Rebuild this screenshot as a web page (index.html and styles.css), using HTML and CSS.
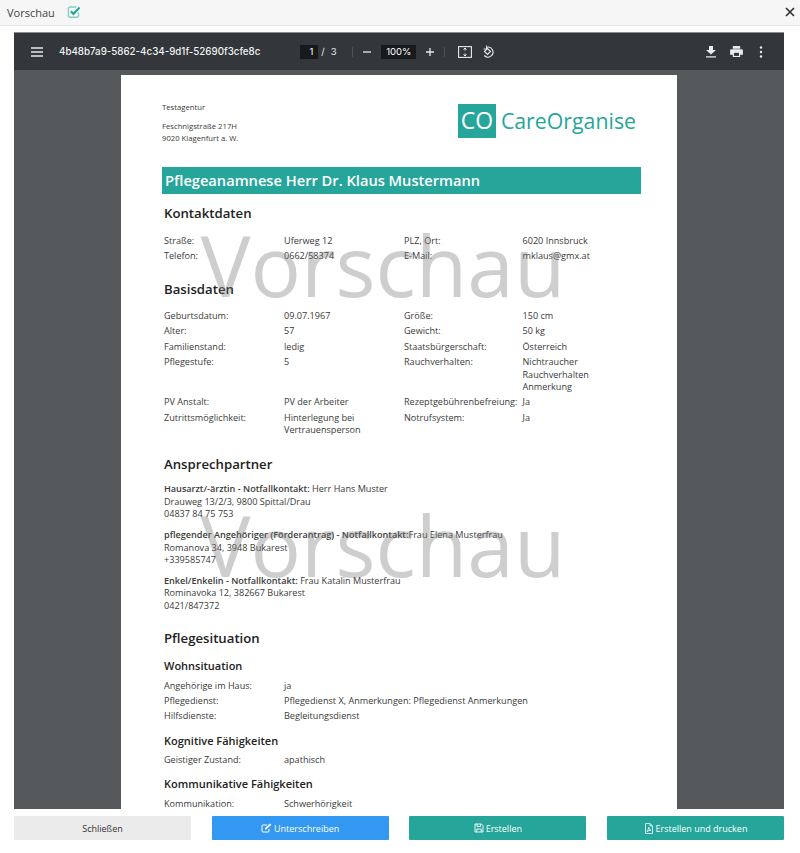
FILE: index.html
```html
<!DOCTYPE html>
<html lang="de">
<head>
<meta charset="utf-8">
<title>Vorschau</title>
<link rel="stylesheet" href="styles.css">
</head>
<body>
<header class="modal-head">
  <span class="modal-title">Vorschau</span>
  <svg class="check-icon" viewBox="0 0 14 14" width="14" height="14"><path d="M11.5 7.5v3.2a1.6 1.6 0 0 1-1.6 1.6H3a1.6 1.6 0 0 1-1.6-1.6V3.6A1.6 1.6 0 0 1 3 2h6.5" fill="none" stroke="#7fcfc4" stroke-width="1.4"/><path d="M3.8 6.2l2.7 2.7 6-6.4" fill="none" stroke="#26a69a" stroke-width="2.2"/></svg>
  <svg class="close-icon" viewBox="0 0 10 10" width="10" height="10"><path d="M1 1l8 8M9 1l-8 8" stroke="#2f3437" stroke-width="1.7" fill="none"/></svg>
</header>
<section class="viewer">
  <div class="toolbar">
    <svg class="tb-menu" viewBox="0 0 12 10" width="12" height="10"><path d="M0 1h12M0 5h12M0 9h12" stroke="#e8eaed" stroke-width="1.5"/></svg>
    <span class="doc-id">4b48b7a9-5862-4c34-9d1f-52690f3cfe8c</span>
    <div class="tb-center">
      <div class="tb-pages"><span class="num-box">1</span><span class="tb-slash">/</span><span class="tb-total">3</span></div>
      <i class="tb-sep sep-a"></i>
      <svg viewBox="0 0 10 10" width="10" height="10"><path d="M1 5h8" stroke="#e8eaed" stroke-width="1.3"/></svg>
      <span class="zoom-box">100%</span>
      <svg viewBox="0 0 10 10" width="10" height="10"><path d="M1 5h8M5 1v8" stroke="#e8eaed" stroke-width="1.3"/></svg>
      <i class="tb-sep sep-b"></i>
      <svg class="tb-fit" viewBox="0 0 14 12" width="14" height="12"><rect x=".6" y=".6" width="12.8" height="10.8" fill="none" stroke="#e8eaed" stroke-width="1.1"/><path d="M7 2v2.6M5.5 3.5L7 2l1.500 1.500M7 10V7.400M5.500 8.500L7 10l1.500-1.500" fill="none" stroke="#e8eaed"/></svg>
      <svg class="tb-rot" viewBox="0 0 14 14" width="14" height="14"><path d="M5.200 2.400A5 5 0 1 1 3.300 10.500" fill="none" stroke="#e8eaed" stroke-width="1.100"/><path d="M6.500 3.500L3.500 6.500l3 3 3-3z" fill="none" stroke="#e8eaed" stroke-width="1.100"/><path d="M5.500 .5v3.500H2.500" fill="none" stroke="#e8eaed" stroke-width=".9"/></svg>
    </div>
    <div class="tb-right">
      <svg viewBox="0 0 10 12" width="10" height="12"><path d="M3 0h4v4h3L5 8.500 0 4h3z M0 10.300h10V11.500H0z" fill="#e8eaed"/></svg>
      <svg viewBox="0 0 14 12" width="13" height="11"><path d="M3 0h8v3H3z M1.500 3.500h11A1.500 1.500 0 0 1 14 5v4.500h-3V12H3V9.500H0V5a1.500 1.500 0 0 1 1.500-1.500z" fill="#e8eaed"/><path d="M4.300 7.500h5.400v3.300H4.300z" fill="#33363a"/></svg>
      <svg class="tb-more" viewBox="0 0 4 12" width="4" height="12"><circle cx="2" cy="1.500" r="1.200" fill="#e8eaed"/><circle cx="2" cy="6" r="1.200" fill="#e8eaed"/><circle cx="2" cy="10.500" r="1.200" fill="#e8eaed"/></svg>
    </div>
  </div>
  <div class="canvas">
    <article class="page">
      <div class="letterhead">
        <div class="sender">
          <p class="agency">Testagentur</p>
          <p>Feschnigstraße 217H<br>9020 Klagenfurt a. W.</p>
        </div>
        <div class="logo"><span class="logo-mark">CO</span><span class="logo-name">CareOrganise</span></div>
      </div>
      <h1 class="doc-title">Pflegeanamnese Herr Dr. Klaus Mustermann</h1>

      <h2 class="sec first">Kontaktdaten</h2>
      <div class="grid4">
        <span>Straße:</span><span>Uferweg 12</span><span>PLZ, Ort:</span><span>6020 Innsbruck</span>
        <span>Telefon:</span><span>0662/58374</span><span>E-Mail:</span><span>mklaus@gmx.at</span>
      </div>

      <h2 class="sec">Basisdaten</h2>
      <div class="grid4">
        <span>Geburtsdatum:</span><span>09.07.1967</span><span>Größe:</span><span>150 cm</span>
        <span>Alter:</span><span>57</span><span>Gewicht:</span><span>50 kg</span>
        <span>Familienstand:</span><span>ledig</span><span>Staatsbürgerschaft:</span><span>Österreich</span>
        <span>Pflegestufe:</span><span>5</span><span>Rauchverhalten:</span><span>Nichtraucher<br>Rauchverhalten<br>Anmerkung</span>
        <span>PV Anstalt:</span><span>PV der Arbeiter</span><span>Rezeptgebührenbefreiung:</span><span>Ja</span>
        <span>Zutrittsmöglichkeit:</span><span>Hinterlegung bei<br>Vertrauensperson</span><span>Notrufsystem:</span><span>Ja</span>
      </div>

      <h2 class="sec sec-contacts">Ansprechpartner</h2>
      <div class="contact"><b>Hausarzt/-ärztin - Notfallkontakt:</b> Herr Hans Muster<br>Drauweg 13/2/3, 9800 Spittal/Drau<br>04837 84 75 753</div>
      <div class="contact"><b>pflegender Angehöriger (Förderantrag) - Notfallkontakt:</b>Frau Elena Musterfrau<br>Romanova 34, 3948 Bukarest<br>+339585747</div>
      <div class="contact"><b>Enkel/Enkelin - Notfallkontakt:</b> Frau Katalin Musterfrau<br>Rominavoka 12, 382667 Bukarest<br>0421/847372</div>

      <h2 class="sec sec-tight">Pflegesituation</h2>
      <h3 class="sub">Wohnsituation</h3>
      <div class="grid2">
        <span>Angehörige im Haus:</span><span>ja</span>
        <span>Pflegedienst:</span><span>Pflegedienst X, Anmerkungen: Pflegedienst Anmerkungen</span>
        <span>Hilfsdienste:</span><span>Begleitungsdienst</span>
      </div>
      <h3 class="sub">Kognitive Fähigkeiten</h3>
      <div class="grid2">
        <span>Geistiger Zustand:</span><span>apathisch</span>
      </div>
      <h3 class="sub">Kommunikative Fähigkeiten</h3>
      <div class="grid2">
        <span>Kommunikation:</span><span>Schwerhörigkeit</span>
      </div>
      <span class="watermark wm-one">Vorschau</span>
      <span class="watermark wm-two">Vorschau</span>
    </article>
  </div>
</section>
<footer class="actions">
  <button class="btn btn-grey">Schließen</button>
  <button class="btn btn-blue"><svg viewBox="0 0 11 10" width="11" height="10"><path d="M8 6v2a1 1 0 0 1-1 1H2a1 1 0 0 1-1-1V3a1 1 0 0 1 1-1h4" fill="none" stroke="currentColor"/><path d="M4 5l5-4.500 1.300 1.300-5 4.700H4z" fill="currentColor"/></svg>Unterschreiben</button>
  <button class="btn btn-teal"><svg viewBox="0 0 10 10" width="10" height="10"><path d="M1 1h6.500L9 2.500V9H1z M3 1v2.500h3.500V1 M2.800 9V6h4.400v3" fill="none" stroke="currentColor" stroke-width=".9"/></svg>Erstellen</button>
  <button class="btn btn-teal"><svg viewBox="0 0 10 11" width="10" height="11"><path d="M1.500 .5h4.500l2.500 2.500v7.500h-7z M6 .5V3h2.500 M3 8.500c1-1 1.500-3 1.800-4.200.3 1.500 1 2.500 2.200 3-1.500 0-2.800.4-4 1.200z" fill="none" stroke="currentColor" stroke-width=".8"/></svg>Erstellen und drucken</button>
</footer>
</body>
</html>
```
FILE: styles.css
```css
* { box-sizing: border-box; }
html, body { margin: 0; height: 853px; overflow: hidden; }
body { background: #fff; font-family: "Open Sans", sans-serif; color: #333; display: flex; flex-direction: column; }

.modal-head { height: 26px; flex: none; display: flex; align-items: center; padding: 0 5px 1px 7px; background: #f6f6f6; border-bottom: 1px solid #e6e6e6; }
.modal-title { font-size: 11px; color: #444; }
.check-icon { margin-left: 12px; }
.close-icon { margin-left: auto; }

.viewer { flex: none; height: 777px; margin: 6px 16px 0 14px; display: flex; flex-direction: column; background: #54585a; }
.toolbar { height: 38px; flex: none; display: flex; align-items: center; padding: 0 21px 0 17px; background: #33363a; border-top: 1px solid #8a8c8e; color: #e8eaed; }
.doc-id { margin-left: 16px; font: 500 9.750px Inter, Roboto, sans-serif; color: #f1f3f4; white-space: nowrap; }
.tb-center { display: flex; align-items: center; margin-left: 40px; font: 400 9.500px Inter, Roboto, sans-serif; }
.tb-pages { width: 52px; display: flex; align-items: center; }
.num-box { width: 18px; height: 14px; background: #18191b; text-align: right; padding-right: 5px; line-height: 14px; color: #fff; }
.tb-slash { margin-left: 3px; }
.tb-total { margin-left: 6px; }
.tb-sep { width: 1px; height: 10px; background: #4f5256; }
.sep-a { margin-right: 9px; }
.sep-b { margin: 0 13px 0 9px; }
.zoom-box { width: 35px; height: 14px; background: #18191b; margin: 0 9px; text-align: center; line-height: 14px; color: #fff; }
.tb-rot { margin-left: 9px; }
.tb-right { margin-left: auto; display: flex; align-items: center; gap: 14px; }
.tb-more { margin-left: 2px; }

.canvas { flex: 1; min-height: 0; overflow: hidden; display: flex; justify-content: center; padding-top: 5px; }
.page { width: 556px; height: 800px; flex: none; background: #fff; padding: 27px 36px 0 42px; position: relative; font-size: 9.100px; line-height: 15.500px; color: #3a3a3a; }

.letterhead { display: flex; justify-content: space-between; height: 65px; font-size: 7.700px; line-height: 11.800px; }
.sender { margin-left: -1px; }
.sender p { margin: 0 0 7.500px; }
.logo { display: flex; align-items: center; height: 34px; margin: 2px 5px 0 0; }
.logo-mark { width: 38px; height: 34px; background: #26a69a; color: #fff; font-size: 23px; font-weight: 500; line-height: 33px; text-align: center; }
.logo-name { margin-left: 5px; color: #26a69a; font-size: 21.300px; font-weight: 500; line-height: 34px; }

.doc-title { margin: 0 0 0 -1.500px; height: 27px; padding-left: 3.500px; background: #26a69a; color: #fff; font-size: 14.650px; font-weight: 600; line-height: 27px; }
.sec { margin: 17px 0 12px 1px; font-size: 13.200px; font-weight: 600; line-height: 18px; color: #222; }
.sec.first { margin-top: 10px; margin-bottom: 13px; }
.sec-contacts { margin-top: 19px; margin-bottom: 10px; }
.sec-tight { margin-bottom: 11px; margin-top: 17px; }
.sub { margin: 10px 0 6.500px 1px; font-size: 11px; font-weight: 600; line-height: 15px; color: #222; }
.sec-tight + .sub { margin-top: 0; }
.grid4 { display: grid; grid-template-columns: 120px 120px 118.500px 1fr; margin-left: 1px; line-height: 12.300px; row-gap: 3.200px; }
.grid2 { display: grid; grid-template-columns: 120px 1fr; margin-left: 1px; line-height: 12.300px; row-gap: 3px; }
.contact { margin: 0 0 8.600px 1px; line-height: 12.400px; }
.contact b { font-weight: 600; }

.watermark { position: absolute; left: 79.500px; font-size: 84px; line-height: 100px; color: rgba(120,120,120,.36); white-space: nowrap; }
.wm-one { top: 140px; }
.wm-two { top: 420px; }

.actions { flex: none; display: grid; grid-template-columns: repeat(4, 177px); justify-content: space-between; margin: 7px 16px 0 14px; }
.btn { height: 24px; border: 0; border-radius: 1px; font: 9px "Open Sans", sans-serif; display: flex; align-items: center; justify-content: center; gap: 2px; padding: 0; }
.btn-grey { background: #ebebeb; color: #333; }
.btn-blue { background: #3398f2; color: #fff; }
.btn-teal { background: #26a69a; color: #fff; }
```
